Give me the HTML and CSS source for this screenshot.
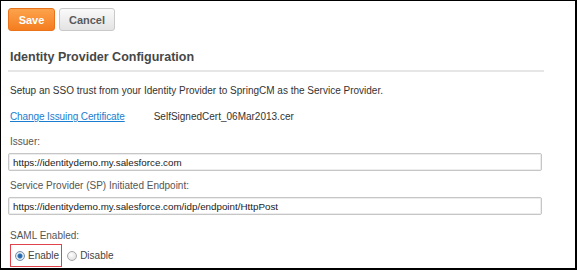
FILE: index.html
```html
<!DOCTYPE html>
<html lang="en">
<head>
  <meta charset="UTF-8">
  <title>Identity Provider Configuration</title>
  <link rel="stylesheet" href="styles.css">
</head>
<body>
  <div class="frame">
    <div class="toolbar">
      <button class="btn btn-save">Save</button>
      <button class="btn btn-cancel">Cancel</button>
    </div>

    <h2 class="section-title">Identity Provider Configuration</h2>

    <p class="intro">Setup an SSO trust from your Identity Provider to SpringCM as the Service Provider.</p>

    <div class="cert-row">
      <a href="#" class="link">Change Issuing Certificate</a>
      <span class="cert-name">SelfSignedCert_06Mar2013.cer</span>
    </div>

    <label class="field-label">Issuer:</label>
    <input class="text-input" type="text" value="https://identitydemo.my.salesforce.com">

    <label class="field-label field-label-sp">Service Provider (SP) Initiated Endpoint:</label>
    <input class="text-input" type="text" value="https://identitydemo.my.salesforce.com/idp/endpoint/HttpPost">

    <label class="field-label field-label-saml">SAML Enabled:</label>
    <div class="radio-row">
      <label class="radio-opt highlighted"><input type="radio" name="saml" checked> Enable</label>
      <label class="radio-opt"><input type="radio" name="saml"> Disable</label>
    </div>
  </div>
</body>
</html>
```

FILE: styles.css
```css
* {
  box-sizing: border-box;
}

body {
  margin: 0;
  font-family: 'Liberation Sans', Arial, sans-serif;
  font-size: 10px;
  color: #333;
  background: #fff;
}

.frame {
  width: 577px;
  height: 270px;
  border-style: solid;
  border-color: #000;
  border-width: 1px 2px 2px 1px;
  padding: 7px 0 0 7px;
  overflow: hidden;
  display: flex;
  flex-direction: column;
  align-items: flex-start;
}

.toolbar {
  display: flex;
  gap: 4px;
}

.btn {
  height: 23px;
  border-radius: 3px;
  font-family: inherit;
  font-size: 11px;
  font-weight: bold;
  padding: 0;
}

.btn-save {
  width: 47px;
  color: #fff;
  border: 1px solid #e8731a;
  background: linear-gradient(to bottom, #fca34c, #f47d1f);
}

.btn-cancel {
  width: 56px;
  color: #5a5a5a;
  border: 1px solid #c9c9c9;
  background: linear-gradient(to bottom, #fafafa, #e3e3e3);
}

.section-title {
  align-self: stretch;
  margin: 18px 31px 0 0;
  padding: 0 2px 5px;
  font-size: 12.5px;
  line-height: 16px;
  color: #474747;
  border-bottom: 2px solid #e6e6e6;
}

.intro {
  margin: 12px 0 0 2px;
  line-height: 13px;
}

.cert-row {
  margin: 13px 0 0 2px;
  line-height: 13px;
  display: flex;
  gap: 29px;
}

.link {
  color: #1a7dd0;
  letter-spacing: -0.1px;
}

.cert-name {
  color: #333;
}

.field-label {
  margin: 12px 0 0 2px;
  line-height: 13px;
  color: #555;
}

.field-label-sp {
  margin-top: 8px;
}

.field-label-saml {
  margin-top: 14px;
}

.text-input {
  margin-top: 5px;
  width: 534px;
  height: 18px;
  padding: 0 4px;
  border: 1px solid #c6c6c6;
  border-radius: 2px;
  box-shadow: inset 0 0 0 1px #ededed;
  font-family: inherit;
  font-size: 9.8px;
  color: #1a1a1a;
}

.radio-row {
  margin: 2px 0 0 2px;
  display: flex;
  align-items: center;
  gap: 1px;
}

.radio-opt {
  display: flex;
  align-items: center;
  gap: 3px;
  height: 23px;
  padding: 0 2px 0 4px;
  font-size: 10px;
  color: #444;
}

.highlighted {
  border: 1px solid #e0434b;
}

.radio-opt input {
  appearance: none;
  margin: 0;
  width: 10px;
  height: 10px;
  border-radius: 50%;
  border: 1px solid #a8a8a8;
  background: radial-gradient(circle at 40% 35%, #fff, #d8d8d8);
}

.radio-opt input:checked {
  background: radial-gradient(circle, #1f5f9f 0, #2d75b8 2px, #e8eef5 3px, #cfd8e2 5px);
  border-color: #7a8ea5;
}
```
